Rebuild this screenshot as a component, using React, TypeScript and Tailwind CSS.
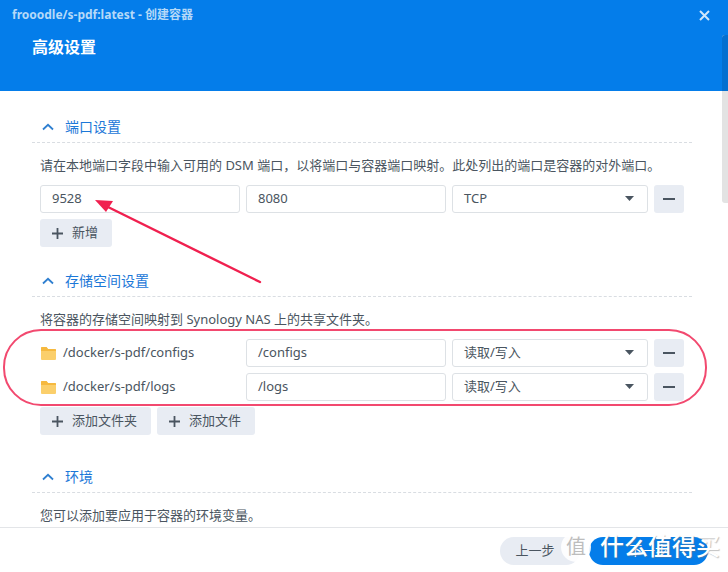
import React from "react";

const font = { fontFamily: '"Noto Sans", "Noto Sans CJK SC", sans-serif' };

function Chevron() {
  return (
    <svg width="12" height="8" viewBox="0 0 12 8" fill="none" className="shrink-0">
      <path d="M1 6.5 L6 1.8 L11 6.5" stroke="#2f7fd0" strokeWidth="1.8" />
    </svg>
  );
}

function SectionHead({ title }: { title: string }) {
  return (
    <div className="flex h-[31px] items-center gap-[11px] border-b border-dashed border-[#d9dde2] pl-[10px] pb-[1px] text-[14px] text-[#1c78d8]">
      <Chevron />
      <span>{title}</span>
    </div>
  );
}

function Desc({ children, className }: { children: React.ReactNode; className: string }) {
  return <p className={`pl-2 text-[13px] leading-[18px] text-[#4a5560] ${className}`}>{children}</p>;
}

function Field({ value }: { value: string }) {
  return (
    <div className="flex h-[28px] w-[200px] shrink-0 items-center rounded-[3px] border border-[#dde1e5] bg-white pl-[11px] text-[13px] text-[#4a5560]">
      {value}
    </div>
  );
}

function Select({ value }: { value: string }) {
  return (
    <div className="relative flex h-[28px] w-[196px] shrink-0 items-center rounded-[3px] border border-[#dde1e5] bg-white pl-[11px] text-[13px] text-[#4a5560]">
      {value}
      <svg width="9" height="5" viewBox="0 0 9 5" className="absolute right-[13px] top-[10px]">
        <path d="M0 0 H9 L4.5 5 Z" fill="#4a5560" />
      </svg>
    </div>
  );
}

function Minus() {
  return (
    <div className="flex h-[28px] w-[30px] shrink-0 items-center justify-center rounded-[3px] bg-[#e8ecf3]">
      <div className="h-[2px] w-[12px] bg-[#4a5560]" />
    </div>
  );
}

function Add({ label, width }: { label: string; width: string }) {
  return (
    <div className={`flex h-[28px] items-center gap-[9px] rounded-[3px] bg-[#e8ecf3] pl-[12px] text-[13px] text-[#4a5560] ${width}`}>
      <svg width="11" height="11" viewBox="0 0 11 11" className="shrink-0">
        <path d="M5.5 0 V11 M0 5.5 H11" stroke="#4a5560" strokeWidth="1.8" />
      </svg>
      <span>{label}</span>
    </div>
  );
}

function Folder() {
  return (
    <svg width="15" height="13" viewBox="0 0 15 13" className="shrink-0">
      <path d="M0 1 Q0 0 1 0 H5.5 L7 2 H14 Q15 2 15 3 V12 Q15 13 14 13 H1 Q0 13 0 12 Z" fill="#fbcf6b" />
      <path d="M0 1 Q0 0 1 0 H5.5 L7 2 H14 Q15 2 15 3 V4 H0 Z" fill="#f6b93f" />
    </svg>
  );
}

function VolumeRow({ host, mount }: { host: string; mount: string }) {
  return (
    <div className="flex gap-[6px]">
      <div className="flex w-[200px] shrink-0 items-center gap-[7px] pl-[1px] text-[13px] text-[#4a5560]">
        <Folder />
        <span>{host}</span>
      </div>
      <Field value={mount} />
      <Select value="读取/写入" />
      <Minus />
    </div>
  );
}

export default function App() {
  return (
    <div className="relative flex h-[572px] w-[728px] flex-col overflow-hidden bg-white" style={font}>
      <header className="relative h-[91px] shrink-0 bg-[#047dea]">
        <div className="pl-[12px] pt-[5px] text-[12px] font-bold leading-[19px] text-[#b5d9f8]">
          frooodle/s-pdf:latest - 创建容器
        </div>
        <div className="pl-[32px] pt-[11px] text-[16px] font-bold leading-[24px] text-white">高级设置</div>
        <svg width="11" height="11" viewBox="0 0 11 11" className="absolute left-[699px] top-[10px]">
          <path d="M1 1 L10 10 M10 1 L1 10" stroke="#cfe6fb" strokeWidth="2" />
        </svg>
      </header>

      <main className="h-[436px] shrink-0 overflow-hidden pl-[32px] pr-[36px] pt-[21px]">
        <SectionHead title="端口设置" />
        <Desc className="mt-[13px]">请在本地端口字段中输入可用的 DSM 端口，以将端口与容器端口映射。此处列出的端口是容器的对外端口。</Desc>
        <div className="ml-2 mt-[11px] flex gap-[6px]">
          <Field value="9528" />
          <Field value="8080" />
          <Select value="TCP" />
          <Minus />
        </div>
        <div className="ml-2 mt-[6px] flex">
          <Add label="新增" width="w-[72px]" />
        </div>

        <div className="mt-[19px]">
          <SectionHead title="存储空间设置" />
        </div>
        <Desc className="mt-[13px]">将容器的存储空间映射到 Synology NAS 上的共享文件夹。</Desc>
        <div className="ml-2 mt-[11px] flex flex-col gap-[6px]">
          <VolumeRow host="/docker/s-pdf/configs" mount="/configs" />
          <VolumeRow host="/docker/s-pdf/logs" mount="/logs" />
        </div>
        <div className="ml-2 mt-[6px] flex gap-[6px]">
          <Add label="添加文件夹" width="w-[111px]" />
          <Add label="添加文件" width="w-[98px]" />
        </div>

        <div className="mt-[27px]">
          <SectionHead title="环境" />
        </div>
        <Desc className="mt-[13px]">您可以添加要应用于容器的环境变量。</Desc>
      </main>

      <footer className="flex flex-1 items-start gap-[9px] border-t border-[#e3e5e8] pl-[500px] pt-[9px]">
        <div className="flex h-[28px] w-[80px] items-center justify-center rounded-full bg-[#e8ecf3] pr-[10px] text-[13px] text-[#4a5560]">
          上一步
        </div>
        <div className="flex h-[28px] w-[119px] items-center justify-center rounded-full bg-[#047dea] text-[13px] text-white">
          下一步
        </div>
      </footer>

      {/* scrollbar */}
      <div className="absolute left-[722px] top-[35px] h-[168px] w-[6px] rounded-l-[3px] bg-[#e3e3e3]">
        <div className="h-[56px] rounded-tl-[3px] bg-[#046fd0]" />
      </div>

      {/* red annotations */}
      <div className="pointer-events-none absolute left-[3px] top-[329px] h-[77px] w-[704px] rounded-[38px] border-2 border-[#f2496f]" />
      <svg width="728" height="572" viewBox="0 0 728 572" className="pointer-events-none absolute left-0 top-0">
        <path d="M260 282 L108 207" stroke="#f0204f" strokeWidth="2.4" strokeLinecap="round" />
        <path d="M95 200 L113 201 L106 212 Z" fill="#f0204f" />
      </svg>

      {/* watermark */}
      <div className="absolute left-[561px] top-[532px] flex h-[30px] w-[30px] items-center justify-center rounded-full bg-white/90 text-[20px] text-[#bdbdbd]">
        值
      </div>
      <div className="absolute left-[600px] top-[530px] whitespace-nowrap text-[24px] font-medium leading-[32px] tracking-[0px] text-white [text-shadow:1px_1px_1px_rgba(120,120,120,0.45)]">
        什么值得买
      </div>
    </div>
  );
}
